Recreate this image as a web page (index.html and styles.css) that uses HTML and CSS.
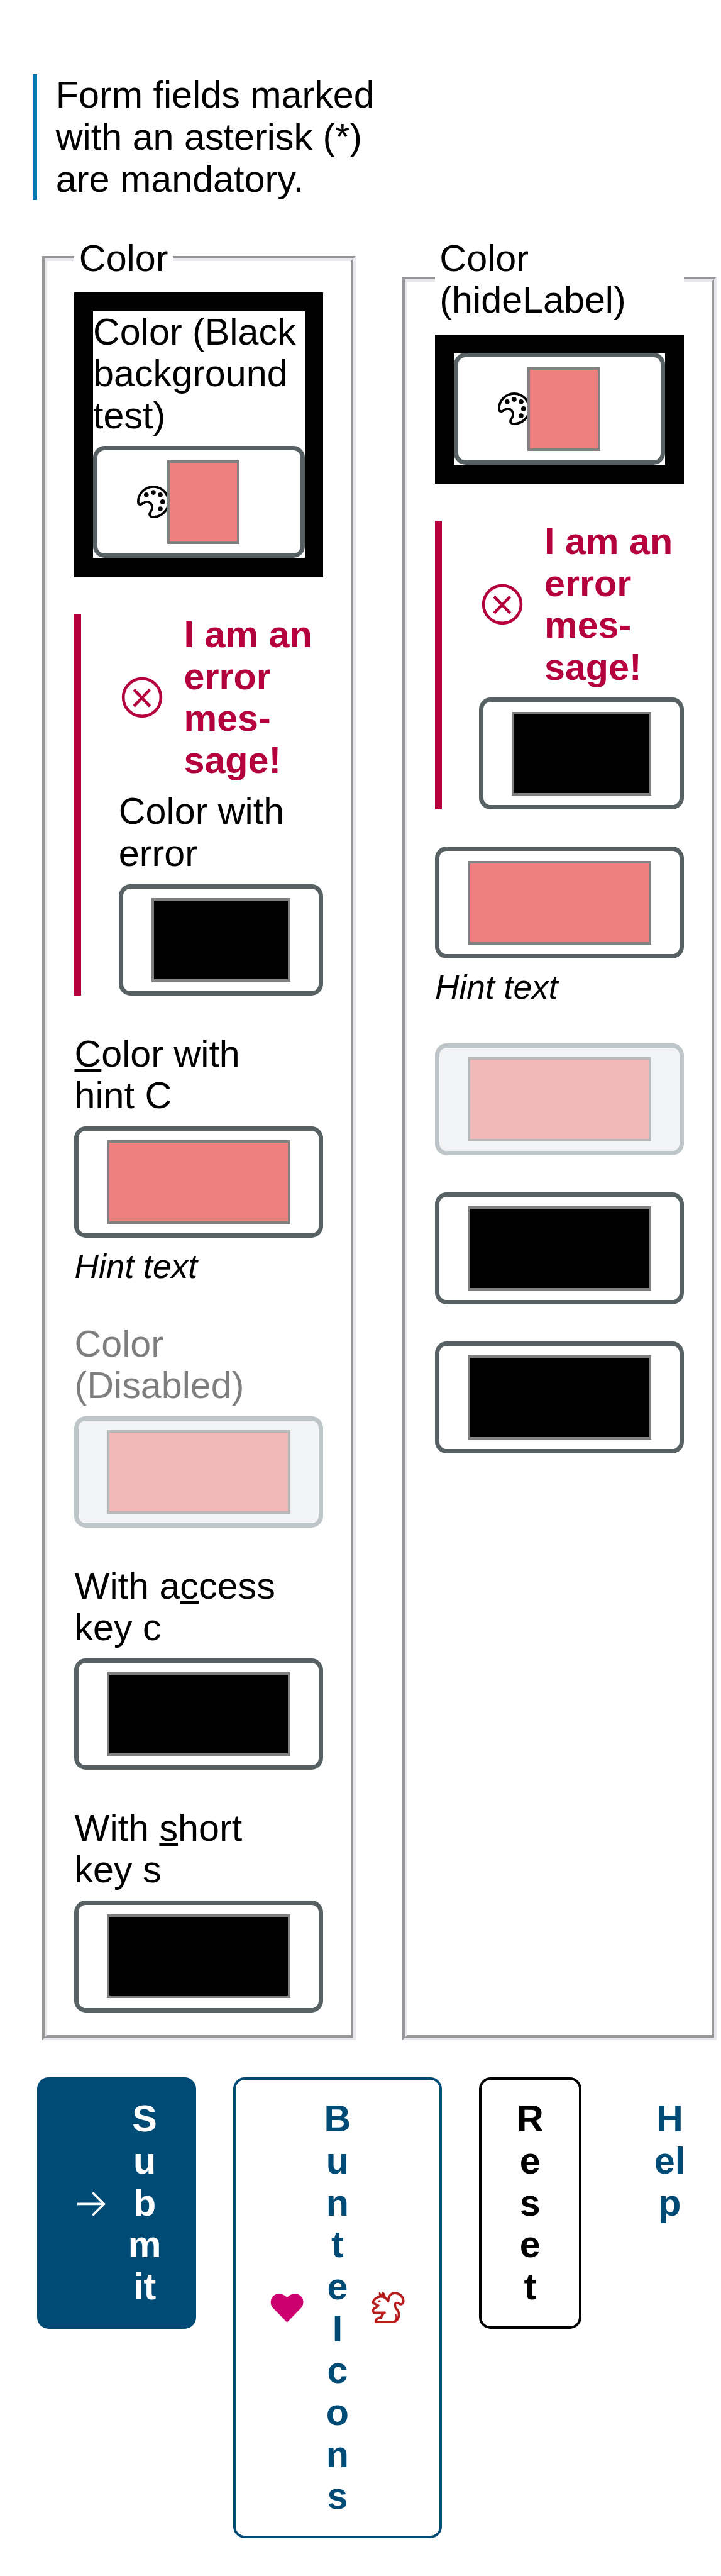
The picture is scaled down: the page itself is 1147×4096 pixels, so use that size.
FILE: index.html
```html
<!DOCTYPE html>
<html lang="en">
<head>
<meta charset="utf-8">
<title>Color inputs</title>
<link rel="stylesheet" href="styles.css">
</head>
<body>
<svg class="defs" aria-hidden="true">
  <symbol id="palette" viewBox="0 0 56 56">
    <path fill="none" stroke="currentColor" stroke-width="4" stroke-linejoin="round" d="M2 28A26 26 0 1 1 28 54C23 54 20.5 51 22 47.5C23.5 44 26 43 26 37.5C26 32 22 28 17 28C11 28 9.5 32.5 6 32.5C3 32.5 2 31 2 28Z"/>
    <g fill="currentColor"><circle cx="16" cy="16" r="4.1"/><circle cx="28" cy="12" r="4.1"/><circle cx="40" cy="16" r="4.1"/><circle cx="44" cy="28" r="4.1"/><circle cx="40" cy="40" r="4.1"/></g>
  </symbol>
  <symbol id="error" viewBox="0 0 80 80">
    <g fill="none" stroke="currentColor" stroke-width="5"><circle cx="40" cy="40" r="32.3"/><path d="M26 26.500L53.500 55M53.500 26.500L26 55"/></g>
  </symbol>
</svg>
<main class="page">
  <p class="notice">Form fields marked with an asterisk (*) are mandatory.</p>

  <div class="columns">
    <fieldset class="group">
      <legend>Color</legend>
      <div class="stack">
        <div class="dark">
          <div class="field">
            <div class="label">Color (Black background test)</div>
            <div class="input with-icon"><svg class="palette"><use href="#palette"/></svg><span class="swatch coral"></span></div>
          </div>
        </div>
        <div class="field invalid">
          <div class="alert"><svg class="alert-icon"><use href="#error"/></svg><span>I am an error mes&shy;sage!</span></div>
          <div class="label">Color with error</div>
          <div class="input"><span class="swatch"></span></div>
        </div>
        <div class="field">
          <div class="label"><u>C</u>olor with hint C</div>
          <div class="input"><span class="swatch coral"></span></div>
          <div class="hint">Hint text</div>
        </div>
        <div class="field disabled">
          <div class="label">Color (Disabled)</div>
          <div class="input"><span class="swatch coral"></span></div>
        </div>
        <div class="field">
          <div class="label">With a<u>c</u>cess key c</div>
          <div class="input"><span class="swatch"></span></div>
        </div>
        <div class="field">
          <div class="label">With <u>s</u>hort key s</div>
          <div class="input"><span class="swatch"></span></div>
        </div>
      </div>
    </fieldset>

    <fieldset class="group">
      <legend>Color (hideLabel)</legend>
      <div class="stack">
        <div class="dark">
          <div class="field">
            <div class="input with-icon"><svg class="palette"><use href="#palette"/></svg><span class="swatch coral"></span></div>
          </div>
        </div>
        <div class="field invalid">
          <div class="alert"><svg class="alert-icon"><use href="#error"/></svg><span>I am an error mes&shy;sage!</span></div>
          <div class="input"><span class="swatch"></span></div>
        </div>
        <div class="field">
          <div class="input"><span class="swatch coral"></span></div>
          <div class="hint">Hint text</div>
        </div>
        <div class="field disabled"><div class="input"><span class="swatch coral"></span></div></div>
        <div class="field"><div class="input"><span class="swatch"></span></div></div>
        <div class="field"><div class="input"><span class="swatch"></span></div></div>
      </div>
    </fieldset>
  </div>

  <div class="actions">
    <button class="btn primary" type="button">
      <svg class="icon" viewBox="0 0 64 64"><g fill="none" stroke="currentColor" stroke-width="4"><path d="M8.500 34H54"/><path d="M35 14.500L54.500 34L35 53.500"/></g></svg>
      <span class="text">Submit</span>
    </button>
    <button class="btn secondary" type="button">
      <svg class="icon heart" viewBox="0 0 64 64"><path fill="currentColor" d="M32 57L8.500 33C2.500 27 2.500 17 8.500 11.500C14.500 6 25 6.500 32 14C39 6.500 49.500 6 55.500 11.500C61.500 17 61.500 27 55.500 33Z"/></svg>
      <span class="text">BunteIcons</span>
      <svg class="icon squirrel" viewBox="-12 -13 192 192"><g fill="none" stroke="currentColor" stroke-width="12" stroke-linejoin="round"><path d="M83 47C74 32 60 24 42 25C24 27 8 40 5 55C10 63 23 64 33 71C28 82 17 80 10 87C4 94 5 103 10 108H66C56 113 49 123 48 135C34 132 20 139 19 156H103C130 156 142 133 138 108C136 92 116 87 119 66C121 54 133 55 143 63C153 68 163 60 162 45C159 22 139 6 118 7C97 8 84 23 84 50Z"/><path stroke-width="7" d="M122 116C127 128 125 144 118 154"/></g><path fill="currentColor" d="M36 26V0L50 11L54 0C65 5 71 12 71 28ZM48 107L70 102L52 128Z"/><circle cx="39" cy="49" r="6" fill="currentColor"/></svg>
    </button>
    <button class="btn normal" type="button"><span class="text">Reset</span></button>
    <button class="btn ghost" type="button"><span class="text">Help</span></button>
  </div>
</main>
</body>
</html>
```
FILE: styles.css
```css
html {
  font-size: 37.03px;
}

*, *::before, *::after {
  box-sizing: border-box;
}

body {
  margin: 0;
  background: #fff;
  color: #000;
  font-family: "Liberation Sans", Arial, sans-serif;
  font-size: 1.6rem;
  line-height: 1.8rem;
}

.defs {
  display: none;
}

.page {
  padding: 3.2rem 0 1.6rem;
}

/* notice */
.notice {
  width: 15.4rem;
  margin: 0 0 1.6rem 1.4rem;
  padding-left: calc(1rem - 7px);
  border-left: 7px solid #0077b6;
}

/* fieldsets */
.columns {
  display: grid;
  grid-template-columns: 1fr 1fr;
  gap: 2rem;
  margin: 0 0.2rem 1.6rem 1.8rem;
}

.group {
  min-width: 0;
  margin: 0;
  padding: 0.56rem calc(1.4rem - 8px) calc(1.2rem - 8px);
  border: 8px groove #e9e8ec;
}

.group legend {
  padding: 0 0.2rem;
}

.stack {
  display: flex;
  flex-direction: column;
  gap: 1.6rem;
}

.dark {
  padding: 0.8rem;
  background: #000;
}

.dark .field {
  background: #fff;
}

/* fields */
.field {
  display: flex;
  flex-direction: column;
  gap: 0.4rem;
}

.label {
  max-width: 9.8rem;
}

.input {
  display: flex;
  align-items: center;
  height: 4.8rem;
  padding: 0 calc(1.4rem - 7px);
  border: 7px solid #576164;
  border-radius: 0.5rem;
  background: #fff;
}

.swatch {
  flex: 1;
  height: 3.6rem;
  border: 4px solid #808080;
  background: #000;
}

.swatch.coral {
  background: #f08080;
}

.with-icon {
  padding: 0 calc(2.8rem - 7px) 0 calc(1.9rem - 7px);
}

.with-icon .swatch {
  z-index: 1;
}

.palette {
  flex: none;
  width: 1.4rem;
  height: 1.4rem;
  margin-right: -0.125rem;
}

.hint {
  font-size: 1.44rem;
  font-style: italic;
  line-height: 1.65rem;
}

.invalid {
  padding-left: calc(1.9rem - 11px);
  border-left: 11px solid #b4003c;
}

.alert {
  display: flex;
  align-items: center;
  gap: 0.8rem;
  color: #b4003c;
  font-weight: 700;
}

.alert-icon {
  flex: none;
  width: 2rem;
  height: 2rem;
}

.disabled .label {
  opacity: 0.5;
}

.disabled .input {
  border-color: #bdc5c9;
  background: #f1f3f5;
}

.disabled .swatch {
  opacity: 0.5;
}

/* buttons */
.actions {
  display: flex;
  align-items: flex-start;
  gap: 1.6rem;
  margin-left: 1.6rem;
}

.btn {
  flex: none;
  display: flex;
  align-items: center;
  justify-content: center;
  gap: 0.8rem;
  width: 4.4rem;
  margin: 0;
  padding: calc(0.9rem - 4px) 0;
  border: 4px solid currentColor;
  border-radius: 0.5rem;
  background: #fff;
  color: #000;
  font: inherit;
  font-weight: 700;
  text-align: center;
}

.text {
  width: 1.4rem;
  word-break: break-all;
}

.icon {
  flex: none;
  width: 1.6rem;
  height: 1.6rem;
}

.primary {
  width: 6.825rem;
  border-color: #004b76;
  background: #004b76;
  color: #fff;
}

.primary .text {
  width: 1.43rem;
}

.secondary {
  width: 8.95rem;
  color: #004b76;
}

.secondary .text {
  width: 1.16rem;
}

.heart {
  color: #cc006e;
}

.squirrel {
  color: #b91c1c;
}

.ghost {
  border-color: transparent;
  color: #004b76;
}
```
